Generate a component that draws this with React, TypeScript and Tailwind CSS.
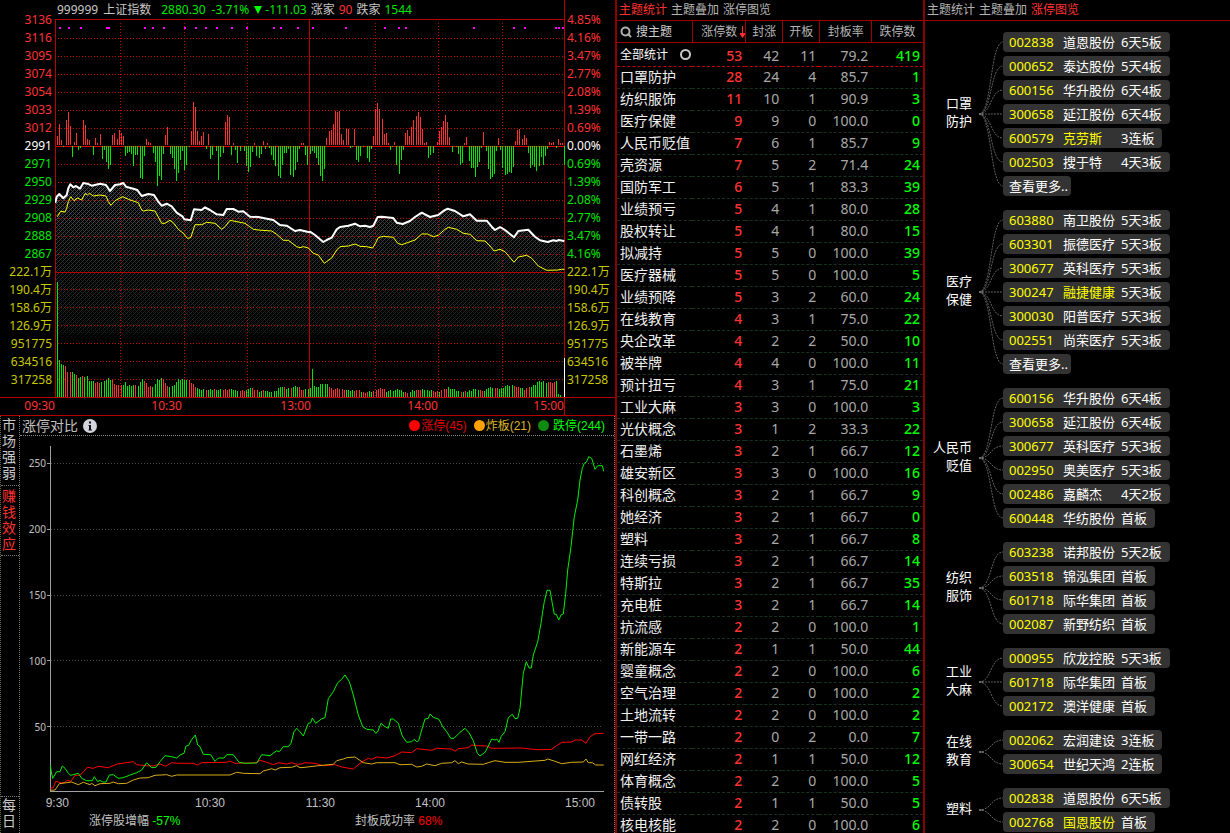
import React from "react";
import { Search } from "lucide-react";

type Point = [number, number];

/* Chart data is stored at three units per pixel. */
const UNIT = 3;
const toPixel = (v: number) => Math.floor(v / UNIT);

const parse = (text: string): Point[] =>
  text
    .trim()
    .split(/\s+/)
    .map((pair) => pair.split(",").map(Number) as Point);

const shift = (points: Point[], dx: number, dy: number): Point[] =>
  points.map(([x, y]) => [x + dx, y + dy]);

const toPolyline = (points: Point[]) =>
  points.map(([x, y]) => `${(x / UNIT).toFixed(1)},${(y / UNIT).toFixed(1)}`).join(" ");

const RISING = [
  ...parse(`172,410 178,372 184,422 199,362 205,336 211,380 223,428 229,399 250,360 256,375 262,419 268,422 286,416
  292,431 301,404 337,407 343,401 352,419 358,392 364,401 370,410 439,419 445,428 451,431 496,407 502,383 574,395
  580,308 586,323 592,395 598,425 604,410 610,398 625,404 676,368 682,347 688,353 700,431 763,431 790,425 802,431
  904,431 910,431`),
  ...shift(
    parse(`64,416 73,395 79,392 85,372 91,333 97,336 103,333 109,404 115,422 124,387 130,387 148,387 205,410 211,329
    217,311 223,329 232,359 238,404 244,401 250,431 268,428 301,401 307,392 313,410 319,383 325,362 334,350 340,336
    346,353 352,387 358,431 364,428 397,428 403,395 409,383 415,365 421,345 427,368 433,413 478,431 484,413 535,398
    580,416 631,425 637,390 643,387 652,419 658,407 664,416 733,428 739,431 745,428 760,419 766,431 772,431`),
    915,
    0
  ),
];

const FALLING = [
  ...parse(`190,443 217,473 235,452 241,446 280,467 307,479 313,450 319,488 325,509 331,497 376,470 382,461 388,458
  394,464 400,500 406,467 412,467 421,536 427,539 433,470 460,461 466,488 472,560 478,530 484,542 490,464 511,464
  517,476 523,509 529,545 535,520 541,482 547,455 553,512 559,497 568,443 619,449 631,479 637,467 649,455 655,542
  661,473 670,461 694,467 706,452 712,491 721,455 733,455 739,500 745,518 751,503 757,458 769,470 778,476 784,464
  796,449 808,446 814,467 820,482 826,500 835,530 841,536 847,497 853,461 859,461 865,449 871,527 880,533 886,512
  892,488 898,449 916,467 922,497`),
  ...shift(
    parse(`7,497 16,464 22,455 28,461 34,476 40,497 46,530 52,545 58,509 136,446 142,443 154,482 160,488 166,470
    175,443 187,476 193,488 199,449 256,452 262,443 274,497 283,524 289,482 295,452 370,476 376,467 385,461 442,458
    454,443 460,464 466,497 472,491 493,485 499,506 505,506 511,533 517,503 523,488 529,446 544,455 550,509 556,539
    562,533 568,524 574,455 586,452 592,506 601,527 607,524 613,518 619,521 625,503 670,461 676,506 682,497 688,503
    694,515 703,500 709,473 715,497 721,470 727,449 754,446 778,497`),
    915,
    0
  ),
];

const INDEX_LINE = [
  ...parse(`166,608 170,590 178,582 190,595 200,585 205,565 211,553 220,562 228,558 240,566 250,549 262,551 275,557
  300,551 318,555 330,573 345,555 360,553 370,549 378,560 400,566 412,570 425,588 445,582 462,585 475,605 485,617
  500,611 515,619 530,638`),
  ...shift(
    parse(`548,35 553,43 572,46 582,13 605,15 615,7 630,15 650,28 670,30 680,12 700,12 715,20 730,19 750,35 775,36
    820,45 840,60 860,62 885,78 900,75 928,82`),
    0,
    615
  ),
  ...shift(
    parse(`15,80 30,90 45,103 55,111 65,105 80,98 95,73 105,66 130,62 150,56 165,64 180,62 195,66 205,62 218,36
    230,35 265,39 275,53 293,57 315,48 330,36 350,23 375,36 400,30 415,18 428,11 450,18 475,34 495,28 515,47 545,47
    560,65 570,75 585,66 600,75 627,97 640,78 670,74 690,95 705,106 728,111 745,106 755,108 760,105 778,108`),
    915,
    615
  ),
];

const AVERAGE_LINE = [
  ...parse(`172,650 182,634 195,636 200,625 205,605 212,590 222,602 232,594 245,600 256,580 262,585 268,580 280,588
  300,585 318,588 325,605 333,616 345,602 368,590 385,598 415,608 425,630 430,633 445,630 465,633 485,670 495,670
  510,661 520,668 535,688 550,700 562,715 572,713 585,674 605,674 620,667 645,670 665,688 675,680 690,661 735,670
  760,688 775,690 815,693 830,703 850,721 865,721 890,740 900,743 910,740 918,742`),
  ...shift(
    parse(`10,744 25,760 40,765 58,790 80,774 95,750 105,740 130,738 150,732 165,739 185,740 203,744 212,728 220,713
    235,709 265,712 278,730 290,734 330,720 350,702 368,702 385,710 400,706 420,688 430,682 455,688 475,700 495,703
    515,722 540,723 555,738 567,753 585,748 600,755 627,787 640,771 665,766 680,775 700,798 725,811 758,810 770,808
    778,808`),
    915,
    0
  ),
];

const VOLUME = [
  ...parse(`172,346 178,113 184,97 190,97 199,91 205,75 223,70 235,59 265,61 268,49 290,42 313,47 325,56 337,52
  345,36 370,37 376,44 382,34 405,36 415,34 427,56 445,32 460,31 472,52 490,56 502,31 520,34 535,52 559,52 568,49
  586,31 600,22 650,22 690,24 720,18 735,18 750,28 775,18 790,20 805,15 830,18 840,34 860,26 890,32 910,22 928,24`),
  ...shift(
    parse(`28,34 35,28 52,40 68,36 80,24 110,24 130,18 160,20 175,15 205,15 215,24 235,24 245,18 270,18 275,26
    285,20 305,14 340,22 380,20 390,14 410,20 430,28 455,20 470,16 485,16 510,24 540,18 555,30 575,26 590,26 600,32
    625,36 640,28 660,24 680,30 695,42 705,48 745,42 755,50 762,5 775,3`),
    915,
    0
  ),
];

const VOLUME_RED = [
  ...parse(`196,212 226,232 246,252 262,266 284,304 335,367 406,411 430,455 487,508 566,592 615,620 640,645 663,670
  675,690 715,738 757,775 790,795 850,860 868,876 895,912`),
  ...parse(`70,118 148,165 175,190 205,240 300,315 330,350 380,400 405,428 462,470 478,485 520,535 570,578 625,645
  655,675 725,750`).map(([a, b]): Point => [a + 915, b + 915]),
];

const valueAt = (points: Point[], x: number) => {
  const next = points.findIndex((p) => p[0] >= x);
  if (next <= 0) return points[next === 0 ? 0 : points.length - 1][1];
  const [x0, y0] = points[next - 1];
  const [x1, y1] = points[next];
  return y0 + ((y1 - y0) * (x - x0)) / (x1 - x0);
};

const VOLUME_BARS = Array.from({ length: 238 }, (_, i) => {
  const x = 172 + i * 6.375;
  const height = Math.max(1, Math.round((valueAt(VOLUME, x) + ((i * 7) % 5) - 2) / UNIT));
  return { x: toPixel(x), height, red: VOLUME_RED.some(([a, b]) => x >= a && x <= b) };
});

const SIGNALS = [
  177, 204, 240, 318, 324, 432, 456, 489, 552, 585, 615, 648, 693, 738, 819, 840, 891, 936, 1035, 1152, 1194, 1215,
  1419, 1539, 1572, 1665, 1674, 1686,
];

const H_GRID = [38, 56, 74, 92, 110, 128, 164, 182, 200, 218, 236, 254, 289, 307, 325, 343, 361, 379];
const V_GRID = [120, 184, 247, 375, 438, 502];

function IndexChart() {
  const line = toPolyline(INDEX_LINE);
  return (
    <svg
      className="block h-[378px] w-full"
      viewBox="55 19 510 378"
      preserveAspectRatio="none"
      role="img"
      aria-label="上证指数分时图"
    >
      <defs>
        <pattern id="hatch" width="4" height="4" patternUnits="userSpaceOnUse" shapeRendering="crispEdges">
          <rect x="0" y="3" width="1" height="1" fill="#6c7070" />
          <rect x="1" y="2" width="1" height="1" fill="#6c7070" />
          <rect x="2" y="1" width="1" height="1" fill="#6c7070" />
          <rect x="3" y="0" width="1" height="1" fill="#6c7070" />
          <rect x="1" y="0" width="1" height="1" fill="#3c4c4c" />
          <rect x="3" y="2" width="1" height="1" fill="#3c4c4c" />
        </pattern>
        <linearGradient id="fade" x1="0" y1="180" x2="0" y2="340" gradientUnits="userSpaceOnUse">
          <stop offset="0" stopColor="#fff" stopOpacity="0.8" />
          <stop offset="0.5" stopColor="#fff" stopOpacity="0.45" />
          <stop offset="0.95" stopColor="#fff" stopOpacity="0.25" />
          <stop offset="1" stopColor="#fff" stopOpacity="0" />
        </linearGradient>
        <mask id="fadeMask" maskUnits="userSpaceOnUse" x="55" y="170" width="510" height="180">
          <rect x="55" y="170" width="510" height="180" fill="url(#fade)" />
        </mask>
      </defs>
      <polygon points={`55,345 ${line} 565,345`} fill="url(#hatch)" mask="url(#fadeMask)" />
      <g shapeRendering="crispEdges">
        {H_GRID.map((y) => (
          <line key={y} x1="58" x2="563" y1={y + 0.5} y2={y + 0.5} stroke="#c80000" strokeDasharray="1 2" />
        ))}
        {V_GRID.map((x) => (
          <line key={x} y1="23" y2="397" x1={x + 0.5} x2={x + 0.5} stroke="#c80000" strokeDasharray="1 2" />
        ))}
        <path d="M55 19.5H565M55.500 19V397M564.500 19V397M309.500 19V397M55 272.500H565" stroke="#b80000" />
        <path d="M56 146.500H564" stroke="#e00000" />
        {RISING.map(([x, y]) => (
          <rect key={x} x={toPixel(x)} y={toPixel(y)} width="1" height={145 - toPixel(y)} fill="#ff3030" />
        ))}
        {FALLING.map(([x, y]) => (
          <rect key={x} x={toPixel(x)} y="146" width="1" height={toPixel(y) - 146} fill="#00e800" />
        ))}
        {VOLUME_BARS.map(({ x, height, red }) => (
          <rect key={x} x={x} y={397 - height} width="1" height={height} fill={red ? "#ff3030" : "#00e800"} />
        ))}
        <rect x="312" y="369" width="1" height="28" fill="#00e800" />
        <rect x="564" y="358" width="1" height="39" fill="#fff" />
        {SIGNALS.map((x) => (
          <rect key={x} x={toPixel(x)} y="27" width="2" height="2" fill="#ff00ff" />
        ))}
      </g>
      <polyline points={toPolyline(AVERAGE_LINE)} fill="none" stroke="#ffff00" strokeWidth="1" />
      <polyline points={line} fill="none" stroke="#fff" strokeWidth="2" strokeLinejoin="round" />
    </svg>
  );
}

const VOLUME_LABELS = ["222.1万", "190.4万", "158.6万", "126.9万", "951775", "634516", "317258"];
const PRICES = "3136 3116 3095 3074 3054 3033 3012 2991 2971 2950 2929 2908 2888 2867".split(" ");
const PERCENTS = "4.85% 4.16% 3.47% 2.77% 2.08% 1.39% 0.69% 0.00% 0.69% 1.39% 2.08% 2.77% 3.47% 4.16%".split(" ");

function AxisLabels({ labels, className }: { labels: string[]; className: string }) {
  return (
    <ul className={`pt-[11px] leading-[18px] whitespace-nowrap ${className}`}>
      {[...labels, ...VOLUME_LABELS].map((label, i) => (
        <li
          key={i}
          className={i < 7 ? "text-[#ff3232]" : i === 7 ? "text-white" : i < 14 ? "text-[#00e600]" : "text-[#c8c800]"}
        >
          {label}
        </li>
      ))}
    </ul>
  );
}

function IndexPanel() {
  return (
    <section>
      <div className="grid grid-cols-[55px_1fr_50px]">
        <AxisLabels labels={PRICES} className="pr-[3px] text-right" />
        <div>
          <header className="flex h-[19px] items-center gap-1 border-r border-[#b80000] pl-0.5 leading-[18px] whitespace-nowrap text-[#c8c8c8]">
            <h1 className="mr-1.5 flex gap-[5px]">
              <span>999999</span>
              <span>上证指数</span>
            </h1>
            <span className="mr-0.5 text-[#00e600]">2880.30</span>
            <span className="text-[#00e600]">-3.71%</span>
            <span className="flex items-center gap-0.5 text-[#00e600]">
              <svg className="size-2.5" viewBox="0 0 10 10" aria-hidden="true">
                <path d="M1 1H9L5 9Z" fill="#00ff00" />
              </svg>
              -111.03
            </span>
            <span>涨家</span>
            <span className="text-[#ff3232]">90</span>
            <span>跌家</span>
            <span className="text-[#00e600]">1544</span>
          </header>
          <IndexChart />
        </div>
        <AxisLabels labels={PERCENTS} className="pl-0.5" />
      </div>
      <div className="grid h-[19px] grid-cols-[55px_127fr_129fr_127fr_127fr_50px] border-y border-[#b80000] text-right leading-4 text-[#ff3232]">
        <span>09:30</span>
        <span>10:30</span>
        <span>13:00</span>
        <span>14:00</span>
        <span className="border-r border-[#b80000]">15:00</span>
        <span />
      </div>
    </section>
  );
}

const LIMIT_DOWN = [
  ...shift(
    parse(`151,436 154,455 158,475 170,455 180,455 187,438 195,445 205,460 212,466 235,460 245,475 260,482 277,482
    283,470 293,485 300,481 308,486 318,486 328,465 340,464 355,475 370,473 390,465 410,458 425,450 440,428 455,443
    468,442 480,425 495,407 515,410 530,414 540,405 552,400 558,378 566,376 574,360 586,345 593,375 600,380 610,403
    632,404 645,424 655,414 672,414 680,404 700,404 717,427 735,430 770,429 785,404 810,407 830,392 838,395 850,380
    865,380 873,370 882,335 890,325 900,335 910,348`),
    0,
    1860
  ),
  ...shift(
    parse(`0,335 10,310 17,308 22,294 32,310 50,296 60,293 70,236 85,215 98,188 110,178 120,165 133,185 145,225
    160,285 173,320 185,328 205,330 212,340 218,335 228,310 240,320 250,325 257,297 265,297 280,310 292,348 305,367
    320,365 328,358 335,365 341,362 350,330 360,297 370,295 375,282 385,292 402,298 412,318 425,335 437,355 447,355
    465,337 480,325 492,338 505,362 517,400 525,408 540,397 550,378 560,357 570,360 575,357 582,367 588,350 600,335
    610,293 622,283 630,296 638,295 645,265 655,160 664,125 672,144 679,144 685,105 698,65 708,10 713,-25 718,-55
    726,-89 735,-89 742,-50 748,-17 754,-17 761,0 768,-15 775,-18 782,-80 788,-150 798,-220 808,-310 818,-360
    825,-420 832,-455 838,-470 845,-475 851,-490 860,-485 870,-452 878,-463 892,-463 896,-446`),
    915,
    1860
  ),
];

const LIMIT_UP = [
  ...shift(
    parse(`151,505 160,503 167,484 185,489 195,487 202,480 212,485 225,466 238,466 248,458 262,442 280,445 295,439
    325,443 352,432 400,425 410,434 440,437 460,438 480,432 497,439 515,428 535,430 580,430 592,435 605,428 680,427
    690,423 705,430 770,428 780,421 800,427 820,434 835,428 860,432 875,428 890,433 905,432`),
    0,
    1860
  ),
  ...shift(
    parse(`0,428 30,430 55,437 90,434 110,441 145,447 165,430 190,415 200,418 215,411 245,414 270,407 290,396
    320,398 335,386 380,391 395,385 440,387 450,394 460,386 490,383 500,375 520,377 545,378 560,385 650,384 675,387
    700,389 740,388 755,377 770,367 800,366 810,360 830,360 843,370 855,350 870,341 896,340`),
    915,
    1860
  ),
];

const LIMIT_BROKEN = [
  ...shift(
    parse(`151,511 165,510 178,491 215,486 235,494 250,487 270,494 275,490 285,497 300,491 330,490 340,486 355,491
    380,490 400,480 420,474 445,473 465,466 500,464 515,469 530,465 690,465 710,457 730,460 780,461 790,453 815,446
    825,450 840,443 875,442 890,437 900,443`),
    0,
    1860
  ),
  ...shift(
    parse(`0,442 40,437 85,433 95,422 115,417 125,413 150,411 175,428 200,432 215,428 270,428 285,434 320,433
    335,441 350,439 365,432 390,437 410,430 440,428 450,422 460,431 470,426 490,432 535,433 550,428 570,422 600,427
    640,427 720,421 728,417 745,422 770,431 800,427 835,426 843,417 850,428 862,428 872,435 896,435`),
    915,
    1860
  ),
];

function LimitChart() {
  return (
    <svg
      className="block h-[360px] w-full"
      viewBox="46 436 568 360"
      preserveAspectRatio="none"
      role="img"
      aria-label="涨停对比走势"
    >
      <g shapeRendering="crispEdges">
        {[463, 529, 595, 660, 726].map((y) => (
          <g key={y}>
            <line x1="51" x2="603" y1={y + 0.5} y2={y + 0.5} stroke="#484848" strokeDasharray="1 2" />
            <line x1="47" x2="50" y1={y + 0.5} y2={y + 0.5} stroke="#a0a0a0" />
          </g>
        ))}
        <path d="M50.500 446V791.500H604" fill="none" stroke="#a0a0a0" />
      </g>
      <polyline points={toPolyline(LIMIT_UP)} fill="none" stroke="#ff0000" />
      <polyline points={toPolyline(LIMIT_BROKEN)} fill="none" stroke="#d8ac18" />
      <polyline points={toPolyline(LIMIT_DOWN)} fill="none" stroke="#00f000" />
    </svg>
  );
}

function LimitPanel() {
  return (
    <section className="grid min-h-0 flex-1 grid-cols-[20px_1fr]">
      <nav className="flex flex-col border-x border-dotted border-l-[#66663a] border-r-[#777] text-[14px] leading-4 text-[#c8c8c8]">
        <button type="button" className="flex h-[70px] items-start border-b border-dotted border-[#777] pt-px">
          <span className="w-4 break-all">市场强弱</span>
        </button>
        <button
          type="button"
          className="flex h-[70px] items-start border-b border-dotted border-[#777] pt-0.5 text-[#ff3232]"
        >
          <span className="w-4 break-all">赚钱效应</span>
        </button>
        <button type="button" className="mt-auto flex h-[37px] items-start border-t border-dotted border-[#777]">
          <span className="w-4 break-all">每日</span>
        </button>
      </nav>
      <div className="min-w-0 border-r border-dotted border-[#777] text-[#c0c0c0]">
        <header className="flex h-5 items-center border-b border-dotted border-[#888] pr-[9px] pl-0.5 whitespace-nowrap">
          <h2 className="text-[14px] leading-5">涨停对比</h2>
          <svg className="ml-[5px] size-[14px]" viewBox="0 0 14 14" aria-hidden="true">
            <circle cx="7" cy="7" r="7" fill="#d4d4dc" />
            <path d="M5.500 6H8V10.500H9V11.500H5.500V10.500H6V7H5.500ZM6 2.500H8V4.500H6Z" fill="#101010" />
          </svg>
          <ul className="ml-auto flex items-center gap-[7px] font-['Liberation_Sans','Noto_Sans_CJK_SC',sans-serif] leading-5">
            <li className="flex items-center gap-px text-[#e00000]">
              <span className="size-[11px] rounded-full bg-[#ff0000]" />
              涨停(45)
            </li>
            <li className="flex items-center gap-px text-[#dcb428]">
              <span className="size-[11px] rounded-full bg-[#ffa000]" />
              炸板(21)
            </li>
            <li className="flex items-center gap-1 text-[#00ff00]">
              <span className="size-[11px] rounded-full bg-[#108a10]" />
              跌停(244)
            </li>
          </ul>
        </header>
        <div className="grid grid-cols-[26px_1fr]">
          <ul className="flex flex-col gap-[50px] pt-[19px] text-right text-[10px] leading-4">
            <li>250</li>
            <li>200</li>
            <li>150</li>
            <li>100</li>
            <li>50</li>
          </ul>
          <LimitChart />
        </div>
        <div className="grid grid-cols-[49fr_156fr_110fr_110fr_150fr_19fr] text-right font-['Liberation_Sans',sans-serif] leading-[14px]">
          <span>9:30</span>
          <span>10:30</span>
          <span>11:30</span>
          <span>14:00</span>
          <span>15:00</span>
        </div>
        <div className="grid grid-cols-[335fr_259fr] font-['Liberation_Sans','Noto_Sans_CJK_SC',sans-serif] leading-[22px] whitespace-nowrap">
          <p className="pl-[69px]">
            涨停股增幅 <span className="text-[#00ff00]">-57%</span>
          </p>
          <p>
            封板成功率 <span className="text-[#ff0000]">68%</span>
          </p>
        </div>
      </div>
    </section>
  );
}

const TABS = ["主题统计", "主题叠加", "涨停图览"];

function Tabs({ active }: { active: string }) {
  return (
    <nav className="flex h-[21px] shrink-0 items-center gap-1 border-b border-[#a00000] pl-0.5 text-[#b4b4b4]">
      {TABS.map((tab) => (
        <button
          key={tab}
          type="button"
          aria-pressed={tab === active}
          className={tab === active ? "leading-5 text-[#ff3232]" : "leading-5"}
        >
          {tab}
        </button>
      ))}
    </nav>
  );
}

type ThemeRow = [string, number, number, number, string, number];

const THEMES: ThemeRow[] = [
  ["口罩防护", 28, 24, 4, "85.7", 1],
  ["纺织服饰", 11, 10, 1, "90.9", 3],
  ["医疗保健", 9, 9, 0, "100.0", 0],
  ["人民币贬值", 7, 6, 1, "85.7", 9],
  ["壳资源", 7, 5, 2, "71.4", 24],
  ["国防军工", 6, 5, 1, "83.3", 39],
  ["业绩预亏", 5, 4, 1, "80.0", 28],
  ["股权转让", 5, 4, 1, "80.0", 15],
  ["拟减持", 5, 5, 0, "100.0", 39],
  ["医疗器械", 5, 5, 0, "100.0", 5],
  ["业绩预降", 5, 3, 2, "60.0", 24],
  ["在线教育", 4, 3, 1, "75.0", 22],
  ["央企改革", 4, 2, 2, "50.0", 10],
  ["被举牌", 4, 4, 0, "100.0", 11],
  ["预计扭亏", 4, 3, 1, "75.0", 21],
  ["工业大麻", 3, 3, 0, "100.0", 3],
  ["光伏概念", 3, 1, 2, "33.3", 22],
  ["石墨烯", 3, 2, 1, "66.7", 12],
  ["雄安新区", 3, 3, 0, "100.0", 16],
  ["科创概念", 3, 2, 1, "66.7", 9],
  ["她经济", 3, 2, 1, "66.7", 0],
  ["塑料", 3, 2, 1, "66.7", 8],
  ["连续亏损", 3, 2, 1, "66.7", 14],
  ["特斯拉", 3, 2, 1, "66.7", 35],
  ["充电桩", 3, 2, 1, "66.7", 14],
  ["抗流感", 2, 2, 0, "100.0", 1],
  ["新能源车", 2, 1, 1, "50.0", 44],
  ["婴童概念", 2, 2, 0, "100.0", 6],
  ["空气治理", 2, 2, 0, "100.0", 2],
  ["土地流转", 2, 2, 0, "100.0", 2],
  ["一带一路", 2, 0, 2, "0.0", 7],
  ["网红经济", 2, 1, 1, "50.0", 12],
  ["体育概念", 2, 2, 0, "100.0", 5],
  ["债转股", 2, 1, 1, "50.0", 5],
  ["核电核能", 2, 2, 0, "100.0", 6],
];

function NumberCells({ row }: { row: ThemeRow }) {
  const [, up, sealed, opened, rate, down] = row;
  return (
    <>
      <td className="border-b border-dashed border-inherit pt-0.5 pr-[3px] font-medium text-[#ff3232]">{up}</td>
      <td className="border-b border-dashed border-inherit pt-0.5 pr-[3px]">{sealed}</td>
      <td className="border-b border-dashed border-inherit pt-0.5 pr-[3px]">{opened}</td>
      <td className="border-b border-dashed border-inherit pt-0.5 pr-[3px]">{rate}</td>
      <td className="border-b border-dashed border-inherit pt-0.5 pr-[3px] font-medium text-[#00ff00]">{down}</td>
    </>
  );
}

function ThemePanel() {
  return (
    <section className="flex min-h-0 min-w-0 flex-col overflow-hidden border-l-2 border-[#8c0000]">
      <Tabs active="主题统计" />
      <table className="w-full table-fixed border-separate border-spacing-0 text-right text-[14px] leading-4 whitespace-nowrap text-[#a8a8a8]">
        <colgroup>
          <col className="w-[24.6%]" />
          <col className="w-[17.3%]" />
          <col className="w-[12.1%]" />
          <col className="w-[12.1%]" />
          <col className="w-[17%]" />
          <col className="w-[16.900%]" />
        </colgroup>
        <thead>
          <tr className="h-[22px] text-center text-[12px] text-[#b4b4b4]">
            <th className="border-b border-[#a00000] p-0 pl-[3px] text-left font-normal">
              <button type="button" className="flex items-center gap-1 text-[#d0d0d0]">
                <Search className="size-3 text-[#b0b0b0]" strokeWidth={4} aria-hidden="true" />
                搜主题
              </button>
            </th>
            <th className="relative border-b border-l border-[#a00000] p-0 font-normal">
              涨停数
              <svg className="absolute top-[5px] right-0 h-3 w-[5px]" viewBox="0 0 5 12" aria-hidden="true">
                <path d="M2 0H3V7H5V8.500L2.500 12L0 8.500V7H2Z" fill="#ff3232" />
              </svg>
            </th>
            <th className="border-b border-l border-[#a00000] p-0 font-normal">封涨</th>
            <th className="border-b border-l border-[#a00000] p-0 font-normal">开板</th>
            <th className="border-b border-l border-[#a00000] p-0 font-normal">封板率</th>
            <th className="border-b border-l border-[#a00000] p-0 font-normal">跌停数</th>
          </tr>
        </thead>
        <tbody>
          <tr className="h-6 border-[#c00000]">
            <td className="border-b border-dashed border-inherit p-0 pl-[3px] text-left text-[12px] text-white">
              <label className="flex items-center gap-3">
                全部统计
                <input
                  type="radio"
                  name="scope"
                  className="size-[11px] appearance-none rounded-full border-2 border-[#c8c8c8]"
                />
              </label>
            </td>
            <NumberCells row={["全部统计", 53, 42, 11, "79.2", 419]} />
          </tr>
          {THEMES.map((row) => (
            <tr key={row[0]} className="h-[22px] border-[#14321e] align-top">
              <td className="border-b border-dashed border-inherit p-0 pt-0.5 pl-[3px] text-left text-[#f0f0f0]">
                {row[0]}
              </td>
              <NumberCells row={row} />
            </tr>
          ))}
        </tbody>
      </table>
    </section>
  );
}

interface Stock {
  code: string;
  name: string;
  streak: string;
  marked?: boolean;
}

interface Group {
  label: string[];
  stocks: Stock[];
  more?: boolean;
}

const stock = (code: string, name: string, streak: string, marked = false): Stock => ({ code, name, streak, marked });

const GROUPS: Group[] = [
  {
    label: ["口罩", "防护"],
    more: true,
    stocks: [
      stock("002838", "道恩股份", "6天5板"),
      stock("000652", "泰达股份", "5天4板"),
      stock("600156", "华升股份", "6天4板"),
      stock("300658", "延江股份", "6天4板"),
      stock("600579", "克劳斯", "3连板", true),
      stock("002503", "搜于特", "4天3板"),
    ],
  },
  {
    label: ["医疗", "保健"],
    more: true,
    stocks: [
      stock("603880", "南卫股份", "5天3板"),
      stock("603301", "振德医疗", "5天3板"),
      stock("300677", "英科医疗", "5天3板"),
      stock("300247", "融捷健康", "5天3板", true),
      stock("300030", "阳普医疗", "5天3板"),
      stock("002551", "尚荣医疗", "5天3板"),
    ],
  },
  {
    label: ["人民币", "贬值"],
    stocks: [
      stock("600156", "华升股份", "6天4板"),
      stock("300658", "延江股份", "6天4板"),
      stock("300677", "英科医疗", "5天3板"),
      stock("002950", "奥美医疗", "5天3板"),
      stock("002486", "嘉麟杰", "4天2板"),
      stock("600448", "华纺股份", "首板"),
    ],
  },
  {
    label: ["纺织", "服饰"],
    stocks: [
      stock("603238", "诺邦股份", "5天2板"),
      stock("603518", "锦泓集团", "首板"),
      stock("601718", "际华集团", "首板"),
      stock("002087", "新野纺织", "首板"),
    ],
  },
  {
    label: ["工业", "大麻"],
    stocks: [
      stock("000955", "欣龙控股", "5天3板"),
      stock("601718", "际华集团", "首板"),
      stock("002172", "澳洋健康", "首板"),
    ],
  },
  {
    label: ["在线", "教育"],
    stocks: [stock("002062", "宏润建设", "3连板"), stock("300654", "世纪天鸿", "2连板")],
  },
  {
    label: ["塑料"],
    stocks: [stock("002838", "道恩股份", "6天5板"), stock("002768", "国恩股份", "首板", true)],
  },
];

function Branches({ count }: { count: number }) {
  const height = count * 24 - 4;
  const middle = height / 2;
  return (
    <svg className="w-6 shrink-0" viewBox={`0 0 24 ${height}`} aria-hidden="true">
      {Array.from({ length: count }, (_, i) => (
        <path
          key={i}
          d={`M0 ${middle}C13 ${middle} 11 ${i * 24 + 10} 24 ${i * 24 + 10}`}
          fill="none"
          stroke="#606060"
          strokeDasharray="2 1"
        />
      ))}
      <path d={`M0 ${middle}H4`} stroke="#808080" />
    </svg>
  );
}

function GroupTree({ group }: { group: Group }) {
  return (
    <li className="flex">
      <h3 className="mr-[7px] flex w-[47px] shrink-0 flex-col justify-center pb-1 text-right leading-[18px]">
        {group.label.map((line) => (
          <span key={line}>{line}</span>
        ))}
      </h3>
      <Branches count={group.stocks.length + (group.more ? 1 : 0)} />
      <ul className="flex flex-col items-start gap-1">
        {group.stocks.map(({ code, name, streak, marked }) => (
          <li key={code}>
            <a href={`#${code}`} className="flex h-5 rounded bg-[#333] pr-2 pl-1.5 leading-5">
              <span className="w-[54px] text-[#ffff00]">{code}</span>
              <span className={marked ? "w-[58px] text-[#ffff00]" : "w-[58px]"}>{name}</span>
              <span>{streak}</span>
            </a>
          </li>
        ))}
        {group.more && (
          <li>
            <a href="#more" className="flex h-5 rounded bg-[#333] pr-[3px] pl-1.5 leading-5">
              查看更多..
            </a>
          </li>
        )}
      </ul>
    </li>
  );
}

function LimitMapPanel() {
  return (
    <section className="flex min-h-0 min-w-0 flex-col overflow-hidden border-l-2 border-[#8c0000]">
      <Tabs active="涨停图览" />
      <ul className="flex flex-col gap-[14px] pt-[11px] text-[13px] whitespace-nowrap text-white">
        {GROUPS.map((group) => (
          <GroupTree key={group.label[0]} group={group} />
        ))}
      </ul>
    </section>
  );
}

export default function App() {
  return (
    <main className="grid h-screen grid-cols-[615fr_308fr_307fr] grid-rows-[minmax(0,1fr)] overflow-hidden bg-black font-['Noto_Sans','Noto_Sans_CJK_SC',sans-serif] text-[12px]">
      <div className="flex min-h-0 min-w-0 flex-col">
        <IndexPanel />
        <LimitPanel />
      </div>
      <ThemePanel />
      <LimitMapPanel />
    </main>
  );
}
